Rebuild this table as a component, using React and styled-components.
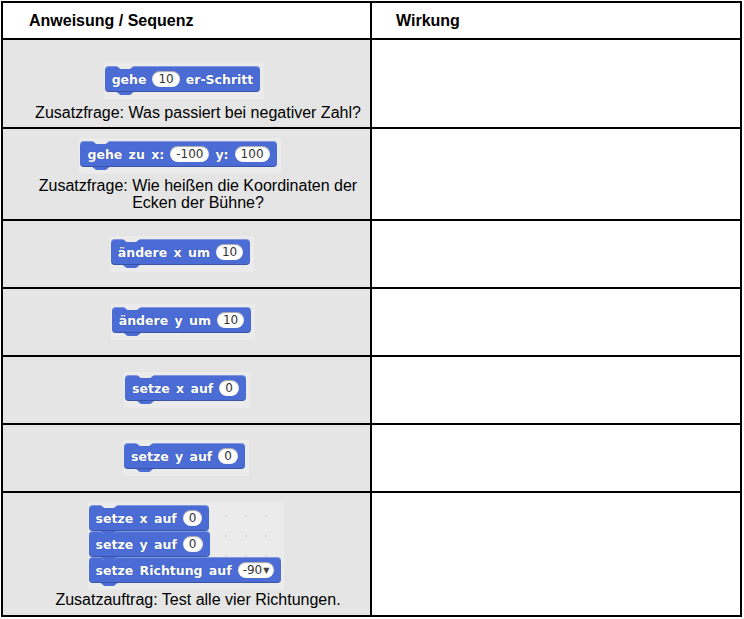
import React from "react";
import styled, { createGlobalStyle } from "styled-components";

const Global = createGlobalStyle`
  html, body { margin: 0; padding: 0; background: #fff; }
  body { font-family: "Liberation Sans", Arial, sans-serif; color: #000; }
`;

const Page = styled.div`
  padding: 1px 0 0 1px;
`;

const Table = styled.div`
  box-sizing: border-box;
  width: 741px;
  display: grid;
  grid-template-columns: 367px 368px;
  grid-template-rows: 35px 87px 90px 66px 66px 66px 66px 122px;
  gap: 2px;
  padding: 2px;
  background: #000;
`;

const HeaderCell = styled.div`
  background: #fff;
  font-weight: bold;
  font-size: 16px;
  line-height: 18px;
  padding: 9px 0 0 ${(p) => p.$indent}px;
`;

const InstructionCell = styled.div`
  background: #e5e5e5;
  display: flex;
  flex-direction: column;
  align-items: center;
  justify-content: ${(p) => (p.$top != null ? "flex-start" : "center")};
  padding: ${(p) => p.$top ?? 0}px 2px 0 25px;
  text-align: center;
  font-size: 16px;
  line-height: 17px;
`;

const EffectCell = styled.div`
  background: #fff;
`;

const Question = styled.div`
  margin-top: ${(p) => p.$gap ?? 0}px;
`;

const BlockFrame = styled.div`
  display: flex;
  flex-direction: column;
  align-items: flex-start;
  align-self: center;
  margin-right: ${(p) => p.$shift ?? 28}px;
  padding: 3px ${(p) => p.$padRight ?? 4}px 7px 1px;
  background-color: #ebebeb;
  background-image: ${(p) =>
    p.$dots ? "radial-gradient(circle, #d9d9d9 1px, transparent 1.2px)" : "none"};
  background-size: 20px 20px;
  background-position: 8px 4px;
`;

const Block = styled.div`
  position: relative;
  display: inline-flex;
  align-items: center;
  gap: 6px;
  height: 26px;
  box-sizing: border-box;
  padding: 0 7px;
  background: #4a6cd4;
  border-radius: 4px;
  box-shadow: inset 0 1px 0 rgba(255, 255, 255, 0.3),
    inset 0 -1px 0 rgba(0, 0, 0, 0.22);
  color: #fff;
  font-family: "DejaVu Sans", Verdana, sans-serif;
  font-weight: bold;
  font-size: 12.5px;
  word-spacing: 2px;
  white-space: nowrap;
  text-shadow: 0 0 1px rgba(20, 40, 110, 0.6);

  &::before {
    content: "";
    position: absolute;
    top: 0;
    left: 12px;
    width: 17px;
    height: 3px;
    background: #ebebeb;
    clip-path: polygon(0 0, 100% 0, 78% 100%, 22% 100%);
  }
  &::after {
    content: "";
    position: absolute;
    bottom: -3px;
    left: 12px;
    width: 17px;
    height: 3px;
    background: #4a6cd4;
    clip-path: polygon(0 0, 100% 0, 78% 100%, 22% 100%);
    z-index: 1;
  }
`;

const Slot = styled.span`
  display: inline-flex;
  align-items: center;
  height: 16px;
  padding: 0 ${(p) => p.$pad ?? 6}px;
  border-radius: 8px;
  background: #fff;
  color: #333;
  font-family: "DejaVu Sans", Verdana, sans-serif;
  font-weight: normal;
  font-size: 12px;
  word-spacing: 0;
  text-shadow: none;
  box-shadow: inset 0 1px 1px rgba(0, 0, 0, 0.35);
`;

const Caret = styled.span`
  font-size: 8px;
  margin-left: 1px;
  color: #444;
`;

const rows = [
  {
    top: 23,
    blocks: [[["gehe"], ["10"], ["er-Schritt"]]],
    question: ["Zusatzfrage: Was passiert bei negativer Zahl?"],
    gap: 5,
  },
  {
    top: 9,
    shift: 36,
    blocks: [[["gehe zu x:"], ["-100"], ["y:"], ["100"]]],
    question: ["Zusatzfrage: Wie heißen die Koordinaten der", "Ecken der Bühne?"],
    gap: 3,
  },
  { blocks: [[["ändere x um"], ["10"]]], shift: 32 },
  { blocks: [[["ändere y um"], ["10"]]], shift: 30 },
  { blocks: [[["setze x auf"], ["0"]]], shift: 22 },
  { blocks: [[["setze y auf"], ["0"]]], shift: 24 },
  {
    top: 9,
    shift: 24,
    dots: true,
    padRight: 3,
    blocks: [
      [["setze x auf"], ["0"]],
      [["setze y auf"], ["0"]],
      [["setze Richtung auf"], ["-90", true]],
    ],
    question: ["Zusatzauftrag: Test alle vier Richtungen."],
    gap: 1,
  },
];

function ScratchBlock({ parts }) {
  return (
    <Block>
      {parts.map((part, i) =>
        i % 2 === 1 ? (
          <Slot key={i} $pad={part[1] ? 5 : 6}>
            {part[0]}
            {part[1] && <Caret>▼</Caret>}
          </Slot>
        ) : (
          <span key={i}>{part[0]}</span>
        )
      )}
    </Block>
  );
}

export default function App() {
  return (
    <>
      <Global />
      <Page>
        <Table>
          <HeaderCell $indent={26}>Anweisung / Sequenz</HeaderCell>
          <HeaderCell $indent={24}>Wirkung</HeaderCell>
          {rows.map((row, r) => (
            <React.Fragment key={r}>
              <InstructionCell $top={row.top}>
                <BlockFrame $shift={row.shift} $dots={row.dots} $padRight={row.padRight}>
                  {row.blocks.map((b, i) => (
                    <ScratchBlock key={i} parts={b} />
                  ))}
                </BlockFrame>
                {row.question && (
                  <Question $gap={row.gap}>
                    {row.question.map((line, i) => (
                      <div key={i}>{line}</div>
                    ))}
                  </Question>
                )}
              </InstructionCell>
              <EffectCell />
            </React.Fragment>
          ))}
        </Table>
      </Page>
    </>
  );
}
